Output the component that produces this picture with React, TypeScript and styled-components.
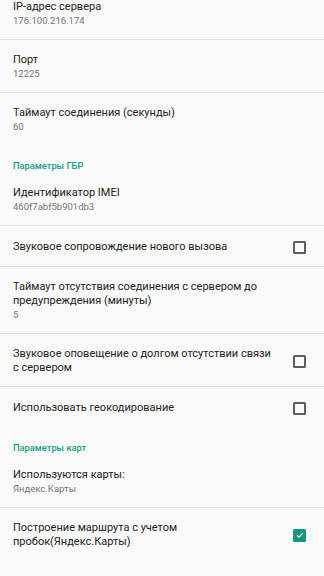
import React from "react";
import styled, { createGlobalStyle } from "styled-components";

const Global = createGlobalStyle`
  html, body { margin: 0; padding: 0; background: #fafafa; }
  body { font-family: Roboto, "Noto Sans", sans-serif; -webkit-font-smoothing: antialiased; }
  #root { width: 324px; height: 576px; overflow: hidden; background: #fafafa; }
`;

const List = styled.div`
  display: flex;
  flex-direction: column;
  margin-top: -13px;
`;

const Item = styled.div<{ $divider?: boolean }>`
  display: flex;
  align-items: center;
  padding: 13px 18px 11px 13px;
  border-bottom: ${(p) => (p.$divider ? "1px solid #e3e3e3" : "1px solid transparent")};
`;

const Texts = styled.div<{ $widget?: boolean }>`
  flex: 1;
  display: flex;
  flex-direction: column;
  padding-right: ${(p) => (p.$widget ? "16px" : "0")};
`;

const Title = styled.div`
  font-size: 11px;
  line-height: 14px;
  color: #212121;
`;

const Summary = styled.div`
  font-size: 9.5px;
  line-height: 14px;
  color: #757575;
`;

const Category = styled.div`
  padding: 13px 13px 0;
  font-size: 9.3px;
  line-height: 14px;
  font-weight: 500;
  color: #179b86;
`;

const Widget = styled.div`
  height: 16px;
  display: flex;
  align-items: center;
  flex-shrink: 0;
`;

const Box = styled.div<{ $checked?: boolean }>`
  width: 13px;
  height: 13px;
  box-sizing: border-box;
  border-radius: 1.5px;
  border: ${(p) => (p.$checked ? "none" : "2px solid #5f5f5f")};
  background: ${(p) => (p.$checked ? "#15967f" : "transparent")};
  display: flex;
  align-items: center;
  justify-content: center;
`;

const CheckBox = ({ checked }: { checked?: boolean }) => (
  <Widget>
    <Box $checked={checked}>
      {checked && (
        <svg width="10" height="10" viewBox="0 0 24 24">
          <path d="M4.5 12.5l4.8 4.8L19.5 7" fill="none" stroke="#fff" strokeWidth="3" />
        </svg>
      )}
    </Box>
  </Widget>
);

type Pref = {
  title: string;
  summary?: string;
  check?: boolean;
  divider?: boolean;
};

const Row = ({ title, summary, check, divider }: Pref) => {
  const hasWidget = check !== undefined;
  return (
    <Item $divider={divider}>
      <Texts $widget={hasWidget}>
        <Title>{title}</Title>
        {summary && <Summary>{summary}</Summary>}
      </Texts>
      {hasWidget && <CheckBox checked={check} />}
    </Item>
  );
};

export default function App() {
  return (
    <>
      <Global />
      <List>
        <Row title="IP-адрес сервера" summary="176.100.216.174" divider />
        <Row title="Порт" summary="12225" divider />
        <Row title="Таймаут соединения (секунды)" summary="60" />
        <Category>Параметры ГБР</Category>
        <Row title="Идентификатор IMEI" summary="460f7abf5b901db3" divider />
        <Row title="Звуковое сопровождение нового вызова" check={false} divider />
        <Row
          title="Таймаут отсутствия соединения с сервером до предупреждения (минуты)"
          summary="5"
          divider
        />
        <Row title="Звуковое оповещение о долгом отсутствии связи с сервером" check={false} divider />
        <Row title="Использовать геокодирование" check={false} />
        <Category>Параметры карт</Category>
        <Row title="Используются карты:" summary="Яндекс.Карты" divider />
        <Row title="Построение маршрута с учетом пробок(Яндекс.Карты)" check={true} />
      </List>
    </>
  );
}
